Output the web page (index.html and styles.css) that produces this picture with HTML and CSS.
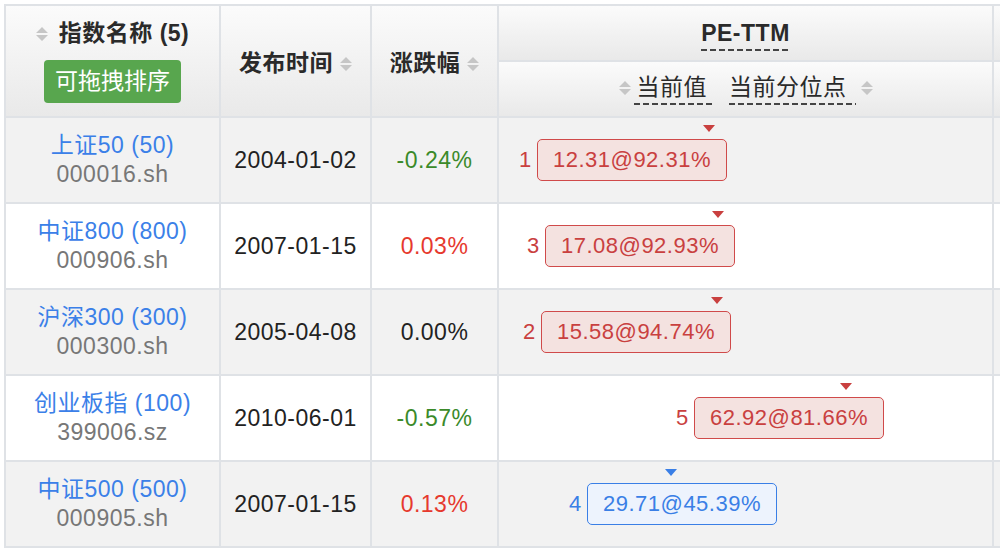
FILE: index.html
```html
<!DOCTYPE html>
<html lang="zh-CN">
<head>
<meta charset="utf-8">
<title>指数估值</title>
<link rel="stylesheet" href="styles.css">
</head>
<body>
<div class="frame">
<table class="grid">
  <colgroup>
    <col class="c-name"><col class="c-date"><col class="c-chg"><col class="c-pe"><col class="c-more">
  </colgroup>
  <thead>
    <tr class="h1">
      <th rowspan="2" class="th-name">
        <div class="title"><svg class="sort sort-l" viewBox="0 0 12 16"><path d="M0 7L6 1L12 7Z M0 9L6 15L12 9Z"/></svg>指数名称 (5)</div>
        <span class="drag-btn">可拖拽排序</span>
      </th>
      <th rowspan="2">发布时间<svg class="sort sort-r" viewBox="0 0 12 16"><path d="M0 7L6 1L12 7Z M0 9L6 15L12 9Z"/></svg></th>
      <th rowspan="2">涨跌幅<svg class="sort sort-r" viewBox="0 0 12 16"><path d="M0 7L6 1L12 7Z M0 9L6 15L12 9Z"/></svg></th>
      <th class="th-pe"><span class="dashed">PE-TTM</span></th>
      <th></th>
    </tr>
    <tr class="h2">
      <th class="th-sub">
        <svg class="sort" viewBox="0 0 12 16"><path d="M0 7L6 1L12 7Z M0 9L6 15L12 9Z"/></svg><span class="dashed sub1">当前值</span><span class="dashed sub2">当前分位点</span><svg class="sort" viewBox="0 0 12 16"><path d="M0 7L6 1L12 7Z M0 9L6 15L12 9Z"/></svg>
      </th>
      <th></th>
    </tr>
  </thead>
  <tbody>
    <tr>
      <td class="name"><a class="link">上证50 (50)</a><span class="code">000016.sh</span></td>
      <td>2004-01-02</td>
      <td class="down">-0.24%</td>
      <td class="pe"><div class="pe-wrap" style="margin-left:20px"><span class="rank red">1</span><span class="box red"><i class="mark" style="left:165px"></i>12.31@92.31%</span></div></td>
      <td></td>
    </tr>
    <tr>
      <td class="name"><a class="link">中证800 (800)</a><span class="code">000906.sh</span></td>
      <td>2007-01-15</td>
      <td class="up">0.03%</td>
      <td class="pe"><div class="pe-wrap" style="margin-left:28px"><span class="rank red">3</span><span class="box red"><i class="mark" style="left:166px"></i>17.08@92.93%</span></div></td>
      <td></td>
    </tr>
    <tr>
      <td class="name"><a class="link">沪深300 (300)</a><span class="code">000300.sh</span></td>
      <td>2005-04-08</td>
      <td>0.00%</td>
      <td class="pe"><div class="pe-wrap" style="margin-left:24px"><span class="rank red">2</span><span class="box red"><i class="mark" style="left:169px"></i>15.58@94.74%</span></div></td>
      <td></td>
    </tr>
    <tr>
      <td class="name"><a class="link">创业板指 (100)</a><span class="code">399006.sz</span></td>
      <td>2010-06-01</td>
      <td class="down">-0.57%</td>
      <td class="pe"><div class="pe-wrap" style="margin-left:177px"><span class="rank red">5</span><span class="box red"><i class="mark" style="left:145px"></i>62.92@81.66%</span></div></td>
      <td></td>
    </tr>
    <tr>
      <td class="name"><a class="link">中证500 (500)</a><span class="code">000905.sh</span></td>
      <td>2007-01-15</td>
      <td class="up">0.13%</td>
      <td class="pe"><div class="pe-wrap" style="margin-left:70px"><span class="rank blue">4</span><span class="box blue"><i class="mark" style="left:77px"></i>29.71@45.39%</span></div></td>
      <td></td>
    </tr>
  </tbody>
</table>
</div>
</body>
</html>
```
FILE: styles.css
```css
html, body {
  margin: 0;
  padding: 0;
  overflow: hidden;
  background: #fff;
}
body {
  font-family: "Liberation Sans", "Noto Sans CJK SC", sans-serif;
  font-size: 23px;
  color: #222;
}
.frame {
  box-sizing: border-box;
  width: 1000px;
  overflow: hidden;
  padding: 4px 0 0 4px;
}
.grid {
  border-collapse: collapse;
  table-layout: fixed;
  width: 1000px;
}
.c-name { width: 215px; }
.c-date { width: 151px; }
.c-chg { width: 127px; }
.c-pe { width: 495px; }
.c-more { width: 12px; }

.grid th, .grid td {
  border: 2px solid #dfe2e6;
  padding: 0;
  text-align: center;
  vertical-align: middle;
  letter-spacing: 0.5px;
}
.grid thead th {
  background: linear-gradient(#fbfbfb, #e9e9e9);
  color: #2a2a2a;
  font-weight: bold;
}
.h1 th { height: 54px; }
.h2 th { height: 54px; }
.grid tbody td { height: 84px; }
.grid tbody tr:nth-child(odd) td { background: #f2f2f2; }
.grid tbody tr:nth-child(even) td { background: #fff; }

.sort {
  width: 12px;
  height: 16px;
  fill: #c6c6c6;
  vertical-align: -1px;
}
.sort-l { margin-right: 11px; }
.sort-r { margin-left: 7px; }

.title {
  line-height: 28px;
  margin-bottom: 13px;
}
.drag-btn {
  display: inline-block;
  width: 137px;
  height: 43px;
  line-height: 43px;
  background: #58a64e;
  color: #fff;
  border-radius: 4px;
  font-weight: normal;
  letter-spacing: 0;
}

.dashed {
  background-image: linear-gradient(to right, #444 66%, transparent 66%);
  background-size: 9px 2px;
  background-repeat: repeat-x;
  background-position: left bottom;
}
.th-pe .dashed {
  padding-bottom: 5px;
}
.grid thead .th-sub {
  font-weight: normal;
  color: #2a2a2a;
}
.th-sub .dashed {
  display: inline-block;
  line-height: 28px;
  padding-bottom: 4px;
}
.sub1 { padding-left: 3px; padding-right: 5px; margin-left: 3px; }
.sub2 { margin-left: 17px; padding-right: 9px; }
.th-sub .sort { margin-left: 5px; }
.th-sub .sort:first-child { margin-left: 0; }

.name {
  line-height: 29px;
}
.link {
  display: block;
  color: #3b80e8;
}
.code {
  display: block;
  color: #777;
}
.down { color: #3b8a2a; }
.up { color: #e6392e; }

.grid td.pe {
  text-align: left;
}
.pe-wrap {
  display: flex;
  align-items: center;
}
.rank {
  width: 12px;
  margin-right: 6px;
  text-align: right;
  font-size: 22px;
}
.box {
  position: relative;
  box-sizing: border-box;
  height: 42px;
  line-height: 40px;
  padding: 0 15px;
  border: 1px solid;
  border-radius: 5px;
  font-size: 22px;
  letter-spacing: 0.5px;
}
.mark {
  position: absolute;
  top: -15px;
  width: 0;
  height: 0;
  border-left: 6px solid transparent;
  border-right: 6px solid transparent;
  border-top: 7px solid currentColor;
}
.red { color: #c9403f; }
.box.red { border-color: #d04a4a; background: #f4e2e0; }
.blue { color: #3a7fe6; }
.box.blue { border-color: #3a7fe6; background: #edf3fd; }
```
